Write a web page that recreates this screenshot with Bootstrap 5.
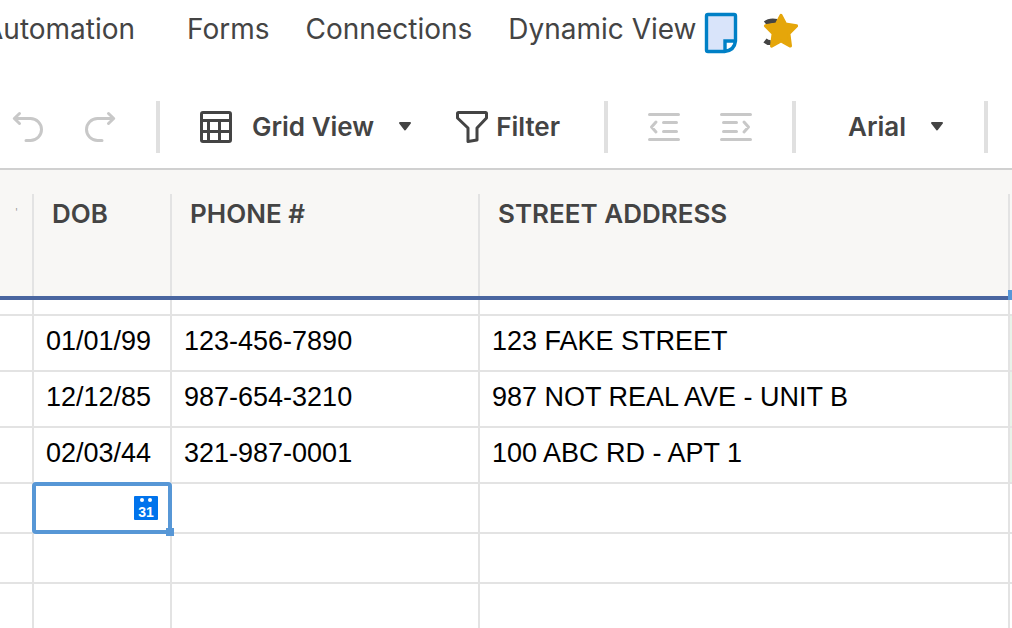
<!DOCTYPE html>
<html lang="en">
<head>
<meta charset="utf-8">
<meta name="viewport" content="width=device-width, initial-scale=1">
<title>Contact sheet</title>
<link href="https://cdn.jsdelivr.net/npm/bootstrap@5.3.0/dist/css/bootstrap.min.css" rel="stylesheet">
<style>
body { font-family: Inter, "Liberation Sans", sans-serif; color: #444; background: #fff; height: 100vh; overflow: hidden; }
svg { display: block; flex: none; }
.menu-bar { height: 60px; margin-left: -16px; padding-bottom: 2px; font-size: 28px; line-height: 36px; gap: 36px; }
.menu-bar a { color: #444; text-decoration: none; }
.doc-icons { margin-left: 6px; padding-top: 4px; gap: 23px; }
.tools { height: 108px; padding: 26px 0 0 12px; gap: 40px; font-size: 26px; line-height: 36px; }
.history { gap: 36px; margin-right: -4px; }
.tools button { border: 0; background: none; padding: 0; color: #444; font-weight: 600; display: flex; align-items: center; white-space: nowrap; }
.tools button:disabled { color: #c8c8c8; }
.view-label { margin: 0 24px 0 20px; }
.filter-btn, .font-btn { margin-left: 4px; }
.filter-btn { margin-right: 4px; }
.font-btn { padding-left: 8px !important; }
.rule { width: 4px; height: 52px; background: #e0e0e0; flex: none; }
.sheet { background: #f8f7f5; border-top: 2px solid #d0d0d0; padding-top: 24px; }
.grid { table-layout: fixed; width: 100%; border-collapse: separate; border-spacing: 0; }
.col-edge { width: 34px; }
.col-dob { width: 138px; }
.col-phone { width: 308px; }
.col-next { width: 2px; }
.grid th { height: 106px; padding: 2px 0 0 18px; vertical-align: top; font-size: 26px; line-height: 36px; font-weight: 600; box-shadow: inset -2px 0 #e3e3e3; border-bottom: 4px solid #4a66a0; white-space: nowrap; }
.grid td { height: 50px; padding: 0 0 0 12px; font: 27px/36px "Liberation Sans", Arial, sans-serif; color: #000; background: #fff; border-right: 2px solid #e3e3e3; border-bottom: 2px solid #e3e3e3; position: relative; white-space: nowrap; }
.grid .filled td { height: 56px; padding-bottom: 4px; }
.grid .sliver td { height: 16px; }
.grid th:last-child, .grid td:last-child { border-right: 0; padding: 0; }
.grid th:last-child { box-shadow: none; position: relative; }
.grid .filled td:last-child { background: #e8f3e9; }
.next-handle { position: absolute; left: -2px; bottom: -4px; width: 4px; height: 10px; background: #5797d8; }
.grid th.tick { color: #999; font-size: 10px; font-weight: 400; line-height: 32px; padding-left: 15px; }
.picked { position: absolute; inset: -2px; padding-right: 10px; border: 4px solid #5797d6; border-radius: 4px; z-index: 1; }
.picked::after { content: ""; position: absolute; right: -6px; bottom: -6px; width: 8px; height: 8px; background: #5797d6; }
.picked button { border: 0; border-radius: 1px; padding: 8px 0 0; background: #0073ec; color: #fff; width: 24px; height: 24px; font: bold 14px/14px "Liberation Sans", Arial, sans-serif; position: relative; }
.picked button::before, .picked button::after { content: ""; position: absolute; top: 2px; width: 4px; height: 4px; border-radius: 50%; background: #fff; }
.picked button::before { left: 6px; }
.picked button::after { left: 14px; }
</style>
<script src="https://cdn.jsdelivr.net/npm/bootstrap@5.3.0/dist/js/bootstrap.bundle.min.js"></script>
</head>
<body>
<header class="d-flex align-items-center">
  <nav class="menu-bar d-flex align-items-center text-nowrap">
    <a href="#" class="me-3">Automation</a>
    <a href="#">Forms</a>
    <a href="#">Connections</a>
    <a href="#">Dynamic View</a>
  </nav>
  <div class="doc-icons d-flex align-items-center">
    <svg width="36" height="44" viewBox="702 10 36 44" role="img" aria-label="Sheet"><path d="M707 14.500h26q1.500 0 1.500 1.500v25q-1 9.500-11 10.500H707q-1.500 0-1.500-1.500V16q0-1.500 1.500-1.500z" fill="#d9e4fa"/><path d="M724 51V41h10.500q-1 8.500-10.500 10z" fill="#fff"/><path d="M707 14.500h26q1.500 0 1.500 1.500v25q-1 9.500-11 10.500H707q-1.500 0-1.500-1.500V16q0-1.500 1.500-1.500zM724 51V41h10.500" fill="none" stroke="#0080c6" stroke-width="3.400"/></svg>
    <svg width="38" height="40" viewBox="761 11 38 40" role="img" aria-label="Favorite"><path d="M764.500 22.500q4-3.500 11.500-2M764 39.500q3 2.500 6 2" fill="none" stroke="#444" stroke-width="5"/><path d="M780 14.500l4.600 8.700 10.900 1.700-7.700 7.600 1.600 12.500-9.400-5.200-9.400 5.200 1.600-12.500-7.700-7.600 10.900-1.700z" fill="#e5a60a" stroke="#e5a60a" stroke-width="3.200" stroke-linejoin="round"/></svg>
  </div>
</header>
<div class="tools d-flex align-items-center" role="toolbar" aria-label="Formatting">
  <div class="history d-flex">
    <button type="button" disabled aria-label="Undo"><svg width="36" height="36" viewBox="12 109 36 36" fill="none" stroke="currentColor" stroke-width="3" stroke-linecap="round" stroke-linejoin="round"><path d="M19.500 113.500l-5.200 5 5.200 5M15 118.500h15.500a11 11 0 0 1 0 22H26"/></svg></button>
    <button type="button" disabled aria-label="Redo"><svg width="36" height="36" viewBox="84 109 36 36" fill="none" stroke="currentColor" stroke-width="3" stroke-linecap="round" stroke-linejoin="round"><path d="M108.500 113.500l5.200 5-5.200 5M113 118.500H97.500a11 11 0 0 0 0 22H102"/></svg></button>
  </div>
  <span class="rule"></span>
  <button type="button"><svg width="32" height="32" viewBox="200 111 32 32" fill="none" stroke="currentColor" stroke-width="3"><rect x="201.500" y="112.500" width="29" height="29" rx="1.500"/><path d="M201 120.500h30M201 131.500h30M208.500 120v22M219.500 120v22"/></svg><span class="view-label">Grid View</span><svg width="14" height="12" viewBox="398 121 14 12"><path d="M400 123h10l-5 6.500z" fill="currentColor" stroke="currentColor" stroke-width="2" stroke-linejoin="round"/></svg></button>
  <button type="button" class="filter-btn"><svg class="me-2" width="32" height="34" viewBox="456 110 32 34" fill="none" stroke="currentColor" stroke-width="3" stroke-linejoin="round"><path d="M458.500 112.500h27q1 0 1 1v4.500l-9.500 10v12l-9 1.500V128l-10.500-10v-4.500q0-1 1-1z"/></svg>Filter</button>
  <span class="rule"></span>
  <button type="button" disabled aria-label="Outdent"><svg width="32" height="30" viewBox="649 112 32 30" fill="none" stroke="currentColor" stroke-width="3" stroke-linecap="round" stroke-linejoin="round"><path d="M650.500 114.500h29M664.500 122.500h13M664.500 131.500h13M650.500 139.500h29M657 122l-4.500 5 4.500 5"/></svg></button>
  <button type="button" disabled aria-label="Indent"><svg width="32" height="30" viewBox="721 112 32 30" fill="none" stroke="currentColor" stroke-width="3" stroke-linecap="round" stroke-linejoin="round"><path d="M722.500 114.500h29M724.500 122.500h13M724.500 131.500h13M722.500 139.500h29M745 122l4.500 5-4.500 5"/></svg></button>
  <span class="rule"></span>
  <button type="button" class="font-btn"><span class="me-4">Arial</span><svg width="14" height="12" viewBox="398 121 14 12"><path d="M400 123h10l-5 6.500z" fill="currentColor" stroke="currentColor" stroke-width="2" stroke-linejoin="round"/></svg></button>
  <span class="rule"></span>
</div>
<main class="sheet">
  <table class="grid">
    <colgroup><col class="col-edge"><col class="col-dob"><col class="col-phone"><col><col class="col-next"></colgroup>
    <thead><tr><th class="tick">'</th><th scope="col">DOB</th><th scope="col">PHONE #</th><th scope="col">STREET ADDRESS</th><th><span class="next-handle"></span></th></tr></thead>
    <tbody>
      <tr class="sliver"><td></td><td></td><td></td><td></td><td></td></tr>
      <tr class="filled"><td></td><td>01/01/99</td><td>123-456-7890</td><td>123 FAKE STREET</td><td></td></tr>
      <tr class="filled"><td></td><td>12/12/85</td><td>987-654-3210</td><td>987 NOT REAL AVE - UNIT B</td><td></td></tr>
      <tr class="filled"><td></td><td>02/03/44</td><td>321-987-0001</td><td>100 ABC RD - APT 1</td><td></td></tr>
      <tr><td></td><td><div class="picked d-flex align-items-center justify-content-end"><button type="button" aria-label="Pick a date">31</button></div></td><td></td><td></td><td></td></tr>
      <tr><td></td><td></td><td></td><td></td><td></td></tr>
      <tr><td></td><td></td><td></td><td></td><td></td></tr>
    </tbody>
  </table>
</main>
</body>
</html>
